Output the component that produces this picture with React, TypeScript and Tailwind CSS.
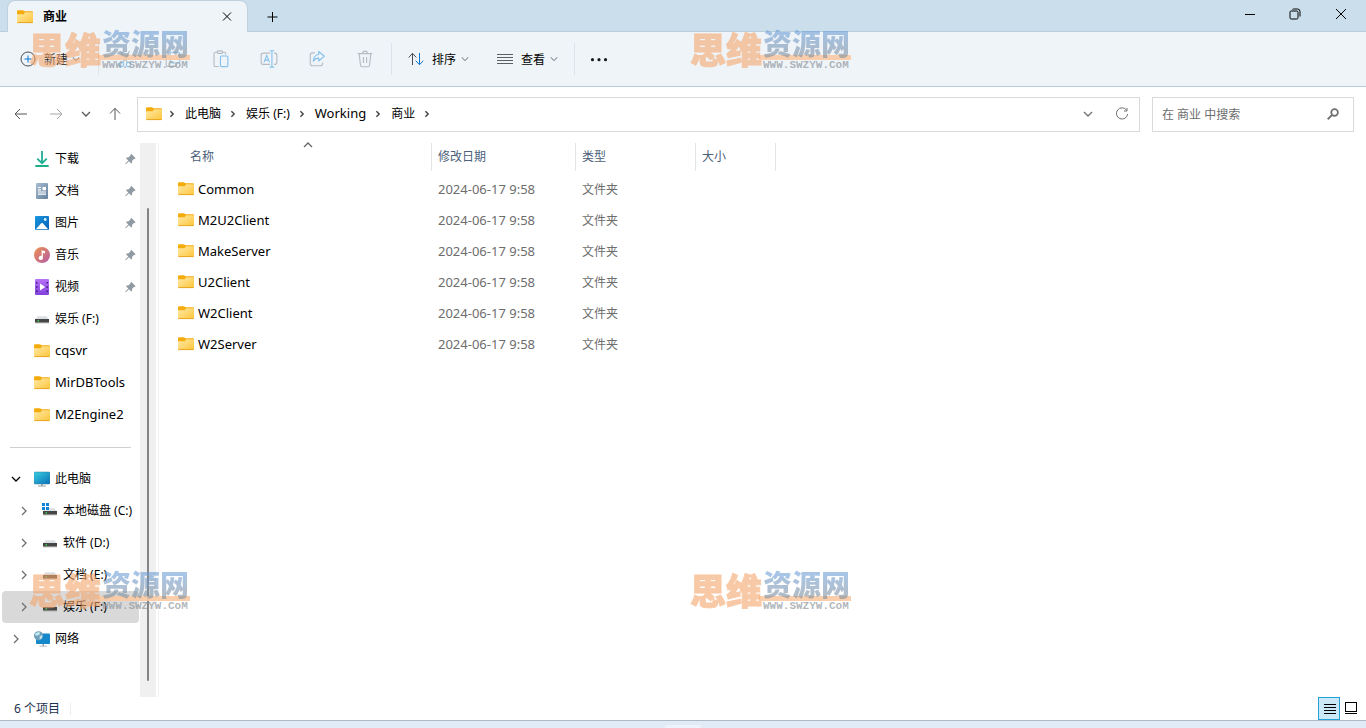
import type { ReactNode } from "react";

const LATIN = "text-[13px]";
const CJK = "text-[12px]";

function Folder() {
  return (
    <svg width="16" height="14" viewBox="0 0 16 14" className="shrink-0" aria-hidden="true">
      <defs>
        <linearGradient id="folderBody" x1="0" y1="0" x2="1" y2="1">
          <stop offset="0" stopColor="#ffe9a8" />
          <stop offset="1" stopColor="#fdc63a" />
        </linearGradient>
      </defs>
      <path d="M0 1.5Q0 .3 1.2 .3H5.6Q6.3 .3 6.8 .8L7.6 1.2H14.8Q16 1.2 16 2.4V6H0Z" fill="#f3ac0c" />
      <path d="M0 4.2H6.6L8.2 2.2H15Q16 2.2 16 3.2V12Q16 13 15 13H1Q0 13 0 12Z" fill="url(#folderBody)" />
      <path d="M.4 12.6H15.6" stroke="#e4a11b" strokeWidth=".9" />
    </svg>
  );
}

function DownloadIcon() {
  return (
    <svg width="16" height="18" viewBox="0 0 16 18" fill="none" strokeWidth="1.8" aria-hidden="true">
      <path d="M8 1V13M3.2 8.6L8 13.2L12.8 8.6" stroke="#1fae92" />
      <path d="M2 16H14" stroke="#1fae8c" strokeLinecap="round" />
    </svg>
  );
}

function DocumentIcon() {
  return (
    <svg width="16" height="16" viewBox="0 0 16 16" aria-hidden="true">
      <defs>
        <linearGradient id="docBody" x1="0" y1="0" x2="1" y2="1">
          <stop offset="0" stopColor="#a9bdd1" />
          <stop offset="1" stopColor="#64819f" />
        </linearGradient>
      </defs>
      <rect x="2" width="12" height="16" rx="1" fill="url(#docBody)" />
      <path d="M4 4.5H7M4 6.8H7M4 9H12M4 11.2H12" stroke="#fff" strokeWidth="1.2" />
      <rect x="8.5" y="4" width="3.5" height="3.3" fill="#fff" />
    </svg>
  );
}

function PictureIcon() {
  return (
    <svg width="16" height="16" viewBox="0 0 16 16" aria-hidden="true">
      <defs>
        <linearGradient id="pictureBody" x1="0" y1="0" x2="1" y2="1">
          <stop offset="0" stopColor="#1a97e0" />
          <stop offset="1" stopColor="#0561b5" />
        </linearGradient>
      </defs>
      <rect x="1" y="1" width="14" height="14" rx="1" fill="url(#pictureBody)" />
      <path d="M1.8 14.2L7.2 8.3Q8 7.5 8.8 8.3L14.2 14.2Z" fill="#fff" />
      <circle cx="11.2" cy="4.5" r="1.4" fill="#d8f2ff" />
    </svg>
  );
}

function MusicIcon() {
  return (
    <svg width="16" height="16" viewBox="0 0 16 16" aria-hidden="true">
      <defs>
        <linearGradient id="musicBody" x1="0" y1="0" x2="1" y2="1">
          <stop offset="0" stopColor="#ee9350" />
          <stop offset="1" stopColor="#b35aa5" />
        </linearGradient>
      </defs>
      <circle cx="8" cy="8" r="8" fill="url(#musicBody)" />
      <path d="M7.6 3.2L11 4.2V6.4L8.9 5.8V11A2.1 2.1 0 1 1 7.6 9Z" fill="#fff" />
    </svg>
  );
}

function VideoIcon() {
  return (
    <svg width="16" height="16" viewBox="0 0 16 16" aria-hidden="true">
      <defs>
        <linearGradient id="videoBody" x1="0" y1="0" x2="0" y2="1">
          <stop offset="0" stopColor="#b873f5" />
          <stop offset="1" stopColor="#8140dc" />
        </linearGradient>
      </defs>
      <rect x="1" width="14" height="16" rx="1" fill="url(#videoBody)" />
      <path d="M2.8 3V14M13.2 3V14" stroke="#3f1c80" strokeWidth="1.5" strokeDasharray="1.6 2.6" />
      <path d="M6 4.6L11.2 8L6 11.4Z" fill="#fff" />
    </svg>
  );
}

function DriveIcon({ system = false }: { system?: boolean }) {
  return (
    <svg width="16" height="16" viewBox="0 0 16 16" aria-hidden="true">
      <path d="M3.4 5.2H12.6L15 8.6H1Z" fill="#dcdfe3" />
      <rect x="1" y="8" width="14" height="3.6" fill="#454545" />
      <path d="M1 11.8H15" stroke="#8b8b8b" strokeWidth=".8" />
      <rect x="3.5" y="9.2" width="1.6" height="1.3" fill="#3be04e" />
      {system && (
        <>
          <path d="M0 0H7V7H0Z" fill="#fff" />
          <path d="M0 0H3V3H0ZM4 0H7V3H4ZM0 4H3V7H0ZM4 4H7V7H4Z" fill="#0b84d8" />
        </>
      )}
    </svg>
  );
}

function ComputerIcon() {
  return (
    <svg width="16" height="16" viewBox="0 0 16 16" aria-hidden="true">
      <defs>
        <linearGradient id="screen" x1="0" y1="0" x2="1" y2="1">
          <stop offset="0" stopColor="#37cfe0" />
          <stop offset="1" stopColor="#0a6fb8" />
        </linearGradient>
      </defs>
      <rect y="1" width="16" height="12" rx="1" fill="url(#screen)" stroke="#3a7f9e" strokeWidth=".5" />
      <path d="M7 13H9V14.6H12V15.4H4V14.6H7Z" fill="#9aa4ab" />
    </svg>
  );
}

function NetworkIcon() {
  return (
    <svg width="16" height="16" viewBox="0 0 16 16" aria-hidden="true">
      <rect x="2" y="2.5" width="14" height="10.5" rx="1" fill="#1587cb" />
      <path d="M8.5 13H10V14.8H13V15.6H5.5V14.8H8.5Z" fill="#9aa4ab" />
      <circle cx="4.6" cy="4.8" r="4.6" fill="#6d9fba" />
      <path d="M1 3Q3 .8 5.4 1L6 3L3.6 4.8L1.6 4.6ZM5.5 5.6L8.2 4L8 7L5.8 8.6Z" fill="#c3e6ee" />
    </svg>
  );
}

function PinIcon() {
  return (
    <svg width="11" height="12" viewBox="0 0 12 12" className="shrink-0" aria-hidden="true">
      <path d="M6.8 .4L11.6 5.2L10.8 6L10 5.8L7.8 8L7.7 10L6.8 10.9L4.3 8.4L1 11.6L.4 11L3.6 7.7L1.1 5.2L2 4.3L4 4.2L6.2 2L6 1.2Z" fill="#8f9aa4" />
    </svg>
  );
}

function Chevron({ dir, size = 10, className = "" }: { dir: "right" | "down" | "up"; size?: number; className?: string }) {
  const d = dir === "right" ? "M3 1L7 5L3 9" : dir === "down" ? "M1 3L5 7L9 3" : "M1 7L5 3L9 7";
  return (
    <svg width={size} height={size} viewBox="0 0 10 10" fill="none" stroke="currentColor" strokeWidth="1.3" className={`shrink-0 ${className}`} aria-hidden="true">
      <path d={d} />
    </svg>
  );
}

function CrumbChevron() {
  return (
    <svg width="10" height="10" viewBox="0 0 10 10" fill="none" stroke="#444" strokeWidth="1.4" className="shrink-0" aria-hidden="true">
      <path d="M3.4 2.2L6.2 5L3.4 7.8" />
    </svg>
  );
}

function Line({ children, size = 16, className = "" }: { children: ReactNode; size?: number; className?: string }) {
  return (
    <svg width={size} height={size} viewBox="0 0 16 16" fill="none" stroke="currentColor" className={`shrink-0 ${className}`} aria-hidden="true">
      {children}
    </svg>
  );
}

const quickItems = [
  { name: "下载", icon: <DownloadIcon />, pinned: true },
  { name: "文档", icon: <DocumentIcon />, pinned: true },
  { name: "图片", icon: <PictureIcon />, pinned: true },
  { name: "音乐", icon: <MusicIcon />, pinned: true },
  { name: "视频", icon: <VideoIcon />, pinned: true },
  { name: "娱乐 (F:)", icon: <DriveIcon /> },
  { name: "cqsvr", icon: <Folder />, latin: true },
  { name: "MirDBTools", icon: <Folder />, latin: true },
  { name: "M2Engine2", icon: <Folder />, latin: true },
];

const drives = [
  { name: "本地磁盘 (C:)", system: true },
  { name: "软件 (D:)" },
  { name: "文档 (E:)" },
  { name: "娱乐 (F:)", selected: true },
];

const files = ["Common", "M2U2Client", "MakeServer", "U2Client", "W2Client", "W2Server"];

function TitleBar() {
  return (
    <header className="flex h-8 shrink-0 items-stretch border-b border-[#b9cedd] bg-[#cbdeec]">
      <div className="-mb-px ml-[7px] flex w-[241px] items-center rounded-t-lg border border-b-0 border-[#bdd1e0] bg-[#eff4f9] pl-[9px] pr-2">
        <Folder />
        <span className="ml-[10px] flex-1 text-[12px] font-bold">商业</span>
        <button type="button" aria-label="关闭标签页" className="p-1">
          <Line size={16}><path d="M4 3.5L12 11.5M12 3.5L4 11.5" /></Line>
        </button>
      </div>
      <button type="button" aria-label="新建标签页" className="ml-[12px] px-1">
        <Line><path d="M8.5 4V14M3.5 9H13.5" /></Line>
      </button>
      <div className="ml-auto flex items-center pb-1 pr-0.5 text-black">
        <button type="button" aria-label="最小化" className="grid h-7 w-[46px] place-items-center">
          <Line><path d="M4 8.5H14" /></Line>
        </button>
        <button type="button" aria-label="还原" className="grid h-7 w-[46px] place-items-center">
          <Line><rect x="3" y="5" width="8" height="8" rx="1.2" /><path d="M5.5 3.5Q5.5 3 6.5 3H10.5Q13 3 13 5.5V10.5" /></Line>
        </button>
        <button type="button" aria-label="关闭" className="grid h-7 w-[46px] place-items-center">
          <Line><path d="M3 3L13 13M13 3L3 13" /></Line>
        </button>
      </div>
    </header>
  );
}

function ToolButton({ label, children }: { label: string; children: ReactNode }) {
  return (
    <button type="button" aria-label={label} className="grid h-8 w-12 place-items-center text-[#b5bcc2]">
      <Line size={18}>{children}</Line>
    </button>
  );
}

function Toolbar() {
  return (
    <div className="flex h-[55px] shrink-0 items-center border-b border-[#b6ccd9] bg-[#eff4f9]">
      <button type="button" className="ml-5 flex h-8 w-[78px] items-center text-[#1b1b1b]">
        <Line className="text-[#4b4f53]"><circle cx="8" cy="8" r="7" /><path d="M8 4.5V11.5M4.5 8H11.5" stroke="#0a76cf" /></Line>
        <span className="ml-2 mr-1 pt-0.5 text-[12px]">新建</span>
        <Chevron dir="down" size={8} className="text-[#8c9196]" />
      </button>
      <span className="h-8 w-px bg-[#dde3e8]" />
      <span className="w-[2px]" />
      <ToolButton label="剪切">
        <path d="M4 1L10 11M12 1L6 11" /><circle cx="4.8" cy="12.8" r="2" stroke="#95c7ea" /><circle cx="11.2" cy="12.8" r="2" stroke="#95c7ea" />
      </ToolButton>
      <ToolButton label="复制">
        <path d="M4.5 4.5H3Q2 4.5 2 5.5V13.5Q2 14.5 3 14.5H9.5Q11 14.5 11 13V12.5" /><rect x="5.5" y="2" width="8.5" height="9.5" rx="1.2" stroke="#95c7ea" />
      </ToolButton>
      <ToolButton label="粘贴">
        <path d="M4.5 2H3Q1.8 2 1.8 3.2V13.5Q1.8 14.7 3 14.7H6M9.5 2H11Q12 2 12 3.2V4" /><rect x="4.5" y=".8" width="5" height="2.2" rx="1.1" /><rect x="7.5" y="5.3" width="6.6" height="9.5" rx="1" stroke="#86c1ea" />
      </ToolButton>
      <ToolButton label="重命名">
        <path d="M9 2.8H3Q1 2.8 1 4.8V10.8Q1 12.8 3 12.8H9M12.5 2.8H13Q15 2.8 15 4.8V10.8Q15 12.8 13 12.8H12.5" />
        <path d="M3.5 11L6 4.8L8.5 11M4.4 9H7.6M10.6 .7V15.2M8.6 .7H12.6M8.6 15.2H12.6" stroke="#86c1ea" />
      </ToolButton>
      <ToolButton label="共享">
        <path d="M6 2.5H4Q2 2.5 2 4.5V12Q2 14 4 14H11Q13 14 13 12V11" />
        <path d="M9.5 1.3L14.5 5.6L9.5 9.8V7.2Q6.5 7 4.7 10Q5 4.5 9.5 4Z" stroke="#86c1ea" strokeLinejoin="round" />
      </ToolButton>
      <ToolButton label="删除">
        <path d="M1.5 3.2H14.5M5.8 3Q6 1 8 1T10.2 3M2.8 3.2L4 13.5Q4.1 14.9 5.4 14.9H10.6Q11.9 14.9 12 13.5L13.2 3.2M6.6 6.3V11.5M9.4 6.3V11.5" />
      </ToolButton>
      <span className="ml-[2px] h-8 w-px bg-[#dde3e8]" />
      <button type="button" className="ml-4 flex h-8 items-center">
        <Line className="text-[#4b4f53]"><path d="M4.5 14V2.5M.7 6.5L4.5 2.3L8.3 6.5" /><path d="M11.5 2V13.5M7.7 9.7L11.5 13.7L15.3 9.7" stroke="#0a76cf" /></Line>
        <span className="ml-2 mr-[5px] pt-0.5 text-[12px]">排序</span>
        <Chevron dir="down" size={8} className="text-[#8c9196]" />
      </button>
      <button type="button" className="ml-7 flex h-8 items-center">
        <Line className="text-[#5c6064]"><path d="M0 3.5H16M0 6.5H16M0 9.5H16M0 12.5H16" /></Line>
        <span className="ml-2 mr-[5px] pt-0.5 text-[12px]">查看</span>
        <Chevron dir="down" size={8} className="text-[#8c9196]" />
      </button>
      <span className="ml-4 h-8 w-px bg-[#dde3e8]" />
      <button type="button" aria-label="更多" className="ml-[15px]">
        <Line size={18}>
          <g fill="#1b1b1b" stroke="none"><circle cx="2.2" cy="8.6" r="1.4" /><circle cx="8" cy="8.6" r="1.4" /><circle cx="13.8" cy="8.6" r="1.4" /></g>
        </Line>
      </button>
    </div>
  );
}

function AddressRow() {
  const crumbs = ["此电脑", "娱乐 (F:)", "Working", "商业"];
  return (
    <div className="flex h-14 shrink-0 items-center gap-3 bg-white pb-0.5 pr-3">
      <div className="-mr-3 flex w-[137px] shrink-0 items-center pl-[13px] text-[#575757]">
        <button type="button" aria-label="后退"><Line><path d="M14 8H2.5M7 3L2 8L7 13" /></Line></button>
        <button type="button" aria-label="前进" className="ml-[19px] text-[#a5a5a5]"><Line><path d="M2 8H13.5M9 3L14 8L9 13" /></Line></button>
        <button type="button" aria-label="最近浏览的位置" className="ml-[17px]"><Chevron dir="down" /></button>
        <button type="button" aria-label="上一级" className="ml-4"><Line><path d="M8 14V2.5M3 7.5L8 2.3L13 7.5" /></Line></button>
      </div>
      <nav aria-label="路径" className="flex h-[35px] min-w-0 flex-1 items-center border border-[#d9d9d9] pl-2 pr-[9px]">
        <Folder />
        <span className="ml-[5px] flex items-center"><CrumbChevron /></span>
        {crumbs.map((c) => (
          <span key={c} className="flex items-center whitespace-nowrap">
            <a href="#" className={`ml-2 mr-[7px] ${c === "Working" ? LATIN : CJK}`}>{c}</a>
            <CrumbChevron />
          </span>
        ))}
        <button type="button" aria-label="历史记录" className="ml-auto text-[#707070]"><Chevron dir="down" /></button>
        <button type="button" aria-label="刷新" className="ml-[21px] text-[#707070]">
          <Line><path d="M12.6 4.2A5.6 5.6 0 1 0 13.6 8M13 2V5H10" /></Line>
        </button>
      </nav>
      <label className="flex h-[35px] w-[202px] shrink-0 items-center border border-[#d9d9d9] pl-[9px] pr-[13px]">
        <input type="search" aria-label="搜索" placeholder="在 商业 中搜索" className="min-w-0 flex-1 bg-transparent pt-px text-[12px] outline-none placeholder:text-[#6d6d6d]" />
        <Line size={14} className="text-[#707070]"><circle cx="9.8" cy="6.2" r="3.8" strokeWidth="2" /><path d="M7 9L2 14" strokeWidth="2.2" /></Line>
      </label>
    </div>
  );
}

function Sidebar() {
  return (
    <nav aria-label="导航窗格" className="w-[140px] shrink-0 overflow-hidden whitespace-nowrap">
      <ul>
        {quickItems.map((q) => (
          <li key={q.name}>
            <a href="#" className="flex h-8 items-center pl-[34px] pr-1">
              {q.icon}
              <span className={`ml-[5px] flex-1 ${q.latin ? LATIN : CJK}`}>{q.name}</span>
              {q.pinned && <PinIcon />}
            </a>
          </li>
        ))}
      </ul>
      <hr className="my-4 ml-[10px] mr-[9px] -mb-px border-[#d0d0d0]" />
      <ul className="mt-4">
        <li>
          <a href="#" className="flex h-8 items-center pl-[11px]">
            <Chevron dir="down" className="text-black" />
            <span className="ml-[13px]"><ComputerIcon /></span>
            <span className="ml-[5px] text-[12px]">此电脑</span>
          </a>
          <ul>
            {drives.map((d) => (
              <li key={d.name}>
                <a href="#" className={`ml-0.5 mr-px flex h-8 items-center rounded-sm pl-[17px] ${d.selected ? "bg-[#d9d9d9]" : ""}`}>
                  <Chevron dir="right" className="text-[#707070]" />
                  <span className="ml-[13px]"><DriveIcon system={d.system} /></span>
                  <span className="ml-[5px] text-[12px]">{d.name}</span>
                </a>
              </li>
            ))}
          </ul>
        </li>
        <li>
          <a href="#" className="flex h-8 items-center pl-[11px]">
            <Chevron dir="right" className="text-[#707070]" />
            <span className="ml-[13px]"><NetworkIcon /></span>
            <span className="ml-[5px] text-[12px]">网络</span>
          </a>
        </li>
      </ul>
    </nav>
  );
}

function FileTable() {
  const th = "h-7 border-r border-[#e5e5e5] pl-[6px] text-left text-[12px] font-normal text-[#4c607a]";
  return (
    <main className="ml-[2px] min-w-0 flex-1 border-l border-[#f3f3f3] pl-[19px]">
      <table className="w-[598px] table-fixed border-separate border-spacing-0">
        <colgroup>
          <col className="w-[254px]" /><col className="w-36" /><col className="w-30" /><col className="w-20" />
        </colgroup>
        <thead>
          <tr>
            <th scope="col" className="relative h-7 border-r border-[#e5e5e5] pl-3 text-left text-[12px] font-normal text-[#4c607a]">
              名称
              <Chevron dir="up" className="absolute left-[125px] top-[-3px] text-[#666]" />
            </th>
            <th scope="col" className={th}>修改日期</th>
            <th scope="col" className={th}>类型</th>
            <th scope="col" className={th}>大小</th>
          </tr>
        </thead>
        <tbody className="before:block before:h-[3px]">
          {files.map((f) => (
            <tr key={f}>
              <td className="h-[31px] p-0">
                <a href="#" className="flex items-center gap-1 text-[13px]"><span className="flex pb-0.5"><Folder /></span>{f}</a>
              </td>
              <td className="p-0 pl-[6px] text-[13px] text-[#6d6d6d]">2024-06-17 9:58</td>
              <td className="p-0 pl-[6px] text-[12px] text-[#6d6d6d]">文件夹</td>
              <td />
            </tr>
          ))}
        </tbody>
      </table>
    </main>
  );
}

function StatusBar() {
  return (
    <footer className="flex h-[23px] shrink-0 items-center bg-white pl-[14px] pr-1 text-[12px] text-[#1e3350]">
      <span>6 个项目</span>
      <span className="ml-[10px] h-3 w-px bg-[#ededed]" />
      <div className="ml-auto flex items-center text-black">
        <button type="button" aria-label="详细信息" className="grid h-[23px] w-[22px] place-items-center border border-[#26a0da] bg-[#cbe8f6]">
          <Line><path d="M3 3.5H15M3 6.5H15M3 9.5H15M3 12.5H15" /></Line>
        </button>
        <button type="button" aria-label="大图标" className="grid h-[23px] w-[22px] place-items-center">
          <Line><rect x="2.5" y="1.5" width="11" height="9" /><path d="M2 12.5H14" /></Line>
        </button>
      </div>
    </footer>
  );
}

function Watermark({ className }: { className: string }) {
  return (
    <div className={`pointer-events-none absolute flex h-10 w-40 select-none ${className}`} aria-hidden="true">
      <div className="-ml-px w-[73px] shrink-0 whitespace-nowrap text-[36px] font-black leading-10 text-[#f5a66c] opacity-60 [-webkit-text-stroke:1px_#f5a66c]">思维</div>
      <div className="flex min-w-0 flex-1 flex-col">
        <div className="h-6 whitespace-nowrap text-[29px] font-black leading-[26px] opacity-60">
          <span className="bg-gradient-to-b from-[#6f9fd6] from-25% to-[#80909f] to-80% bg-clip-text text-transparent">资源网</span>
        </div>
        <div className="-ml-1 h-[5px] shrink-0 bg-[#f9c9a2]/90" />
        <div className="whitespace-nowrap font-['Liberation_Mono',monospace] text-[11px] font-bold leading-[11px] text-[#8f979e]/70">WWW.SWZYW.CoM</div>
      </div>
    </div>
  );
}

export default function App() {
  return (
    <div className="relative flex h-screen flex-col overflow-hidden bg-white font-['Noto_Sans','Noto_Sans_CJK_SC',sans-serif] text-black">
      <TitleBar />
      <Toolbar />
      <AddressRow />
      <div className="flex min-h-0 flex-1">
        <Sidebar />
        <div className="flex w-4 shrink-0 justify-center bg-[#f0f0f0] pb-4 pt-[65px]">
          <div className="w-0.5 rounded bg-[#858585]" />
        </div>
        <FileTable />
      </div>
      <StatusBar />
      <div className="flex h-2 shrink-0 items-end border-t border-[#adb8c4] bg-[#e0ebf7]">
        <span className="mx-auto h-[3px] w-9 rounded-t bg-[#edf3fb]" />
      </div>
      <Watermark className="left-[30px] top-[31px]" />
      <Watermark className="left-[691px] top-[31px]" />
      <Watermark className="left-[30px] top-[572px]" />
      <Watermark className="left-[691px] top-[572px]" />
    </div>
  );
}
